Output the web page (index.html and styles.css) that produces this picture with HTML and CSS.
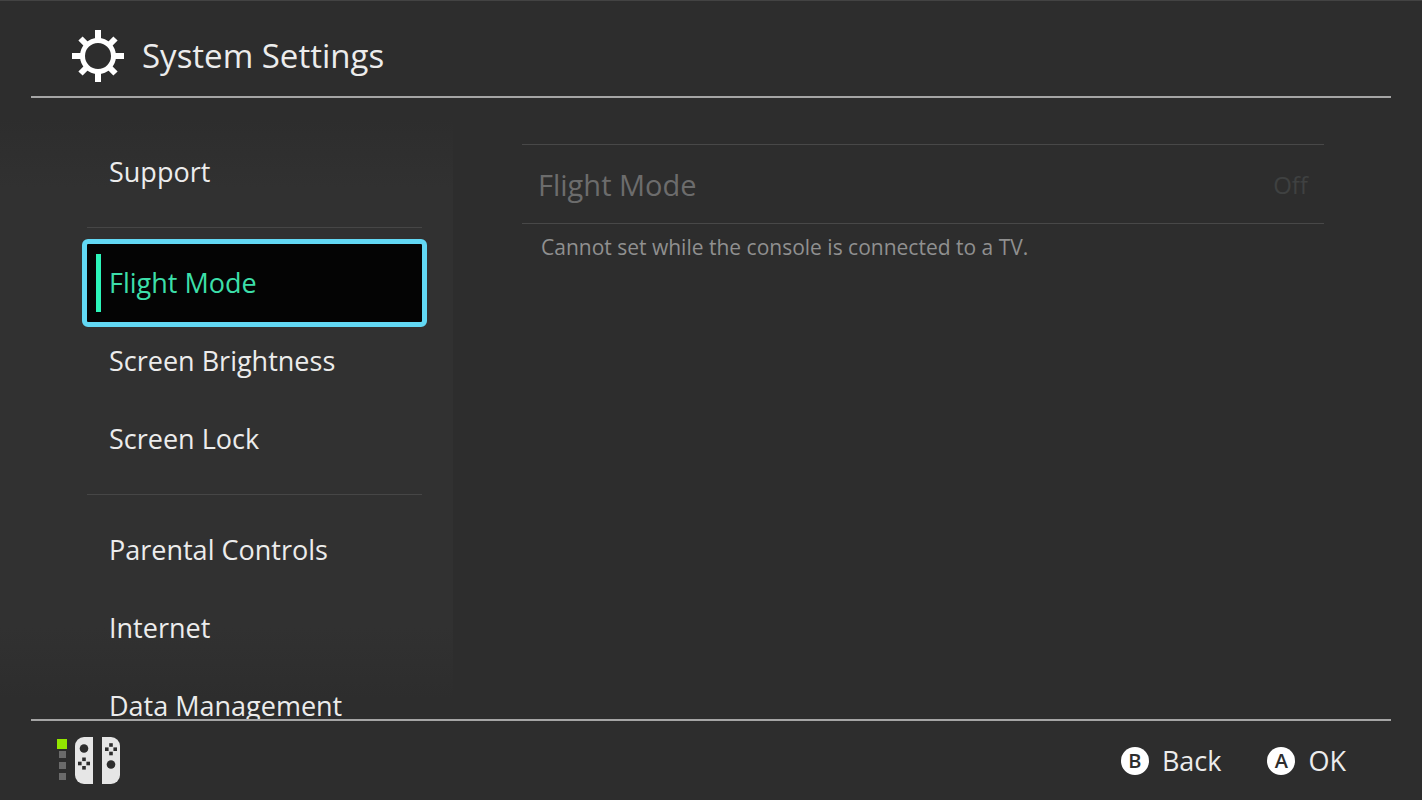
FILE: index.html
```
<!DOCTYPE html>
<html lang="en">
<head>
    <meta charset="UTF-8">
    <meta name="viewport" content="width=device-width, initial-scale=1.0">
    <title>System Settings</title>

    <link rel="stylesheet" href="styles.css">
</head>
<body>
    <header class="header">
        <svg class="gear" viewBox="0 0 52 52" aria-hidden="true">
            <circle cx="26" cy="26" r="15.500" fill="none" stroke="#fff" stroke-width="5"/>
            <g stroke="#fff" stroke-width="6">
                <path d="M26 0v10M26 42v10M0 26h10M42 26h10"/>
                <path d="M8.500 8.500l6 6M37.500 37.500l6 6M8.500 43.500l6-6M37.500 14.500l6-6"/>
            </g>
        </svg>
        <h1>System Settings</h1>
    </header>

    <main class="main">
        <nav class="sidebar">
            <button class="nav-item"><span>Support</span></button>
            <hr>
            <button class="nav-item active"><span>Flight Mode</span></button>
            <button class="nav-item"><span>Screen Brightness</span></button>
            <button class="nav-item"><span>Screen Lock</span></button>
            <hr>
            <button class="nav-item"><span>Parental Controls</span></button>
            <button class="nav-item"><span>Internet</span></button>
            <button class="nav-item"><span>Data Management</span></button>
        </nav>

        <section class="content">
            <button class="setting" disabled>
                <span class="setting-name">Flight Mode</span>
                <span class="setting-value">Off</span>
            </button>
            <p class="note">Cannot set while the console is connected to a TV.</p>
        </section>
    </main>

    <footer class="footer">
        <svg class="controllers" viewBox="0 0 66 48" role="img" aria-label="Player 1 controllers">
            <!-- player lights -->
            <rect x="0" y="2" width="10" height="10" fill="#93e600"/>
            <g fill="#6b6b6b">
                <rect x="2" y="14" width="7" height="7"/>
                <rect x="2" y="25" width="7" height="7"/>
                <rect x="2" y="36" width="7" height="7"/>
            </g>
            <!-- left and right controllers -->
            <g fill="#e6e6e6">
                <path d="M36 0v47h-9a9 9 0 0 1-9-9V9a9 9 0 0 1 9-9z"/>
                <path d="M45 0v47h9a9 9 0 0 0 9-9V9a9 9 0 0 0-9-9z"/>
            </g>
            <g fill="#2d2d2d">
                <circle cx="27" cy="11.500" r="4.300"/>
                <rect x="25.200" y="20.500" width="3.600" height="3.600"/>
                <rect x="25.200" y="29" width="3.600" height="3.600"/>
                <rect x="21" y="24.700" width="3.600" height="3.600"/>
                <rect x="29.400" y="24.700" width="3.600" height="3.600"/>
                <circle cx="54" cy="27.500" r="4.300"/>
                <rect x="52.200" y="6.200" width="3.600" height="3.600"/>
                <rect x="52.200" y="14.700" width="3.600" height="3.600"/>
                <rect x="48" y="10.400" width="3.600" height="3.600"/>
                <rect x="56.400" y="10.400" width="3.600" height="3.600"/>
            </g>
        </svg>

        <div class="actions">
            <button class="action"><b>B</b>Back</button>
            <button class="action"><b>A</b>OK</button>
        </div>
    </footer>
</body>
</html>
```
FILE: styles.css
```
* {
    margin: 0;
    padding: 0;
    box-sizing: border-box;
}

body {
    font-family: 'Open Sans', 'Noto Sans', sans-serif;
    background: #2d2d2d;
    color: #ececec;
    height: 100vh;
    display: flex;
    flex-direction: column;
    overflow: hidden;
    border-top: 1px solid #434343;
}

button {
    font: inherit;
    color: inherit;
    background: none;
    border: none;
    text-align: left;
    cursor: pointer;
}

.header {
    display: flex;
    align-items: center;
    gap: 18px;
    height: 97px;
    margin: 0 31px;
    padding: 14px 41px 0;
    border-bottom: 2px solid #a5a5a5;
}

.gear {
    width: 52px;
    height: 52px;
}

.header h1 {
    font-size: 33px;
    line-height: 48px;
    font-weight: 400;
}

.main {
    flex: 1;
    min-height: 0;
    display: flex;
}

.sidebar {
    width: 453px;
    flex-shrink: 0;
    padding: 35px 31px 0 87px;
    overflow: hidden;
    background: linear-gradient(#2d2d2d 20px, #313131 90px, #313131 530px, #2d2d2d 600px);
}

.sidebar hr {
    border: none;
    height: 1px;
    margin: 16px 0;
    background: #464646;
}

.nav-item {
    display: block;
    width: 100%;
    padding: 10px 9px;
    font-size: 27px;
    line-height: 58px;
}

.nav-item span {
    display: block;
    padding-left: 8px;
    border-left: 5px solid transparent;
}

.nav-item.active {
    background: #040404;
    color: #3cdfa9;
    outline: 5px solid #62d8f4;
    border-radius: 1px;
}

.nav-item.active span {
    border-color: #2cf5b9;
}

.content {
    flex: 1;
    padding: 46px 98px 0 69px;
}

.setting {
    width: 100%;
    height: 80px;
    padding: 0 16px;
    display: flex;
    justify-content: space-between;
    align-items: center;
    border-top: 1px solid #484848;
    border-bottom: 1px solid #484848;
    cursor: default;
}

.setting-name {
    font-size: 29px;
    color: #6c6c6c;
}

.setting-value {
    font-size: 24px;
    color: #3f4141;
}

.note {
    padding: 7px 19px;
    font-size: 21px;
    line-height: 32px;
    color: #909090;
}

.footer {
    display: flex;
    align-items: center;
    justify-content: space-between;
    height: 81px;
    margin: 0 31px;
    padding: 0 45px 0 26px;
    border-top: 2px solid #a5a5a5;
}

.controllers {
    width: 66px;
    height: 48px;
}

.actions {
    display: flex;
    gap: 46px;
}

.action {
    display: flex;
    align-items: center;
    gap: 13px;
    font-size: 27px;
}

.action b {
    width: 28px;
    height: 28px;
    border-radius: 50%;
    background: #fff;
    color: #2d2d2d;
    font-size: 20px;
    line-height: 28px;
    font-weight: 600;
    text-align: center;
}

@media (max-width: 900px) {
    .sidebar {
        width: 340px;
        padding-left: 24px;
        padding-right: 16px;
    }

    .content {
        padding-left: 24px;
        padding-right: 24px;
    }
}
```
